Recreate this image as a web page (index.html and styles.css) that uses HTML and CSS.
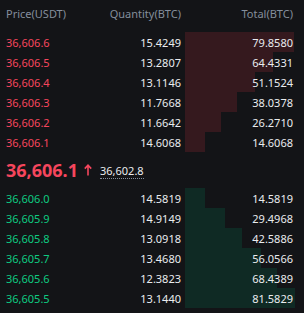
FILE: index.html
```html
<!DOCTYPE html>
<html>
<head>
<meta charset="utf-8">
<link rel="stylesheet" href="styles.css">
</head>
<body>
<div class="book">
  <div class="head">
    <span class="c-price">Price(USDT)</span>
    <span class="c-qty">Quantity(BTC)</span>
    <span class="c-total">Total(BTC)</span>
  </div>
  <div class="side asks">
    <div class="row"><i class="bar" style="width:109px"></i><span class="c-price">36,606.6</span><span class="c-qty">15.4249</span><span class="c-total">79.8580</span></div>
    <div class="row"><i class="bar" style="width:88px"></i><span class="c-price">36,606.5</span><span class="c-qty">13.2807</span><span class="c-total">64.4331</span></div>
    <div class="row"><i class="bar" style="width:69.8px"></i><span class="c-price">36,606.4</span><span class="c-qty">13.1146</span><span class="c-total">51.1524</span></div>
    <div class="row"><i class="bar" style="width:51.9px"></i><span class="c-price">36,606.3</span><span class="c-qty">11.7668</span><span class="c-total">38.0378</span></div>
    <div class="row"><i class="bar" style="width:35.9px"></i><span class="c-price">36,606.2</span><span class="c-qty">11.6642</span><span class="c-total">26.2710</span></div>
    <div class="row"><i class="bar" style="width:19.9px"></i><span class="c-price">36,606.1</span><span class="c-qty">14.6068</span><span class="c-total">14.6068</span></div>
  </div>
  <div class="mid">
    <span class="last">36,606.1</span>
    <svg class="arrow" width="8" height="12" viewBox="0 0 8 12"><path d="M4 11.5V1.2M0.8 4.6L4 1.2L7.2 4.6" fill="none" stroke="#f6465d" stroke-width="1.6"/></svg>
    <span class="mark">36,602.8</span>
  </div>
  <div class="side bids">
    <div class="row"><i class="bar" style="width:19.7px"></i><span class="c-price">36,606.0</span><span class="c-qty">14.5819</span><span class="c-total">14.5819</span></div>
    <div class="row"><i class="bar" style="width:39.8px"></i><span class="c-price">36,605.9</span><span class="c-qty">14.9149</span><span class="c-total">29.4968</span></div>
    <div class="row"><i class="bar" style="width:57.4px"></i><span class="c-price">36,605.8</span><span class="c-qty">13.0918</span><span class="c-total">42.5886</span></div>
    <div class="row"><i class="bar" style="width:75.6px"></i><span class="c-price">36,605.7</span><span class="c-qty">13.4680</span><span class="c-total">56.0566</span></div>
    <div class="row"><i class="bar" style="width:92.3px"></i><span class="c-price">36,605.6</span><span class="c-qty">12.3823</span><span class="c-total">68.4389</span></div>
    <div class="row"><i class="bar" style="width:110px"></i><span class="c-price">36,605.5</span><span class="c-qty">13.1440</span><span class="c-total">81.5829</span></div>
  </div>
</div>
</body>
</html>
```
FILE: styles.css
```css
html, body {
  margin: 0;
  padding: 0;
  background: #131417;
}
body {
  font-family: "Noto Sans", "Open Sans", sans-serif;
  font-size: 11px;
  color: #eaecef;
  width: 304px;
  height: 313px;
  overflow: hidden;
}
.book {
  display: flex;
  flex-direction: column;
}
.head, .row {
  display: grid;
  grid-template-columns: 100px 75px 1fr;
  padding: 0 11px 0 6px;
  align-items: center;
}
.head {
  height: 26px;
  margin-bottom: 6px;
  color: #848e9c;
}
.c-qty, .c-total {
  text-align: right;
}
.row {
  position: relative;
  height: 20px;
}
.row span {
  position: relative;
}
.bar {
  position: absolute;
  left: 185px;
  top: 0;
  bottom: 0;
}
.asks .bar { background: #35191e; }
.bids .bar { background: #0f2a24; }
.asks .c-price { color: #f6465d; }
.bids .c-price { color: #0ecb81; }
.mid {
  height: 36px;
  display: flex;
  align-items: center;
  padding-left: 6px;
}
.last {
  color: #f6465d;
  font-size: 18px;
  font-weight: 700;
  line-height: 22px;
}
.arrow {
  display: block;
  margin-left: 6px;
  margin-top: -1px;
}
.mark {
  margin-left: 8px;
  border-bottom: 1px dotted #848e9c;
  line-height: 14px;
  margin-top: 2px;
}
```
